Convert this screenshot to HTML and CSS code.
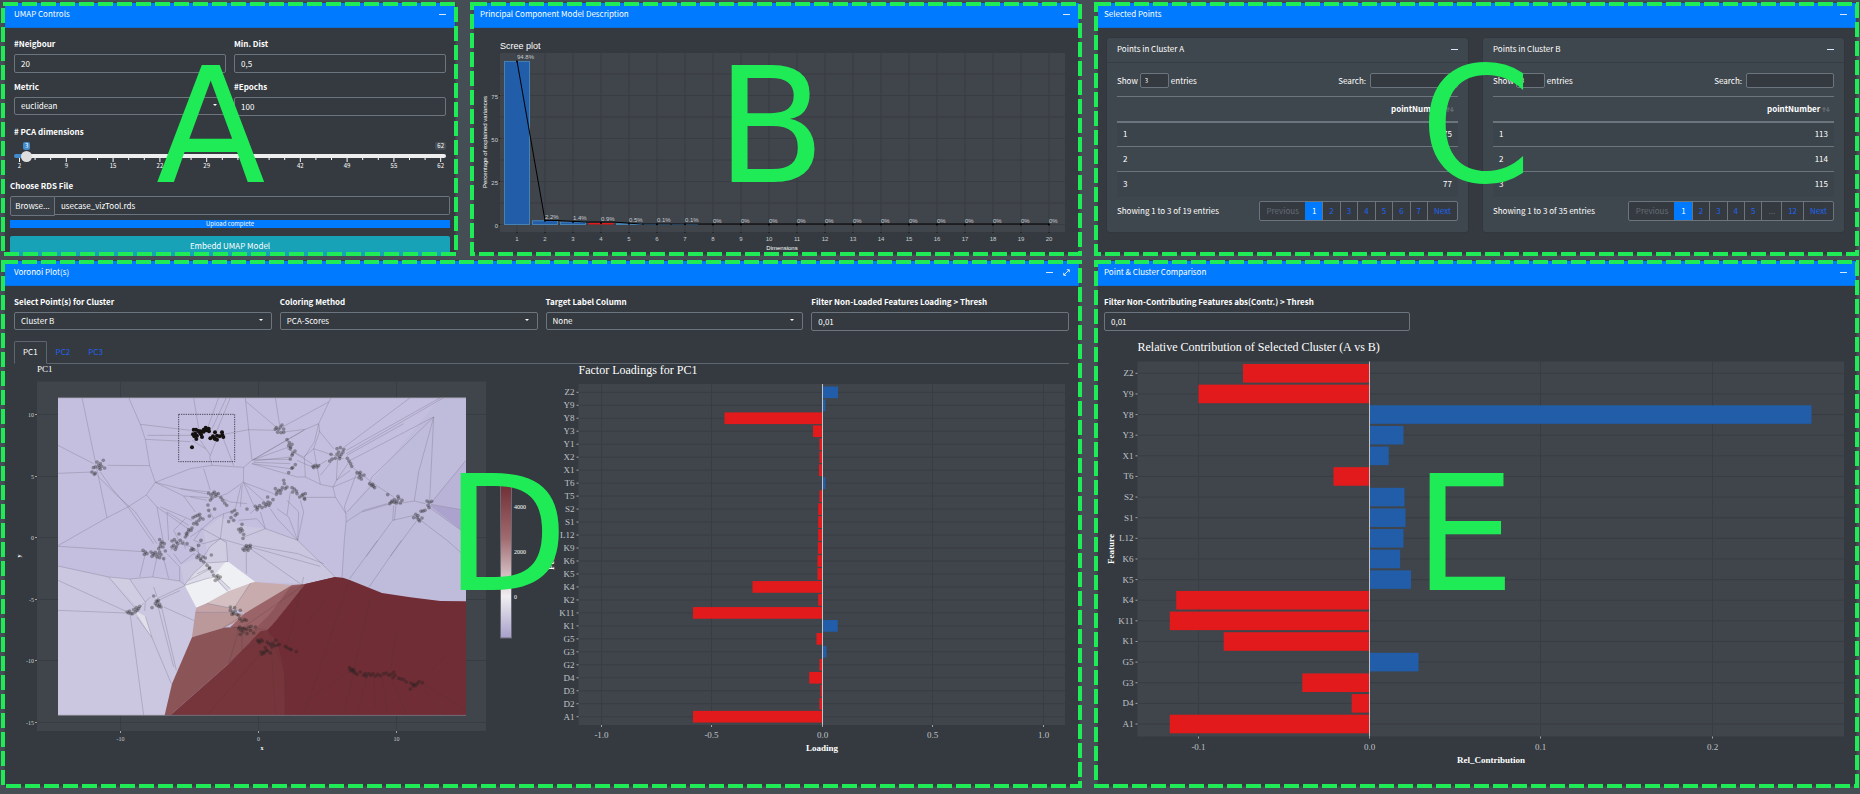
FILE: index.html
```html
<!DOCTYPE html>
<html lang="en">
<head>
<meta charset="utf-8">
<title>UMAP Visualisation</title>
<link rel="stylesheet" href="styles.css">
</head>
<body>
<main class="dashboard">

  <section class="panel panel-controls wide-pad">
    <div class="card">
      <header class="card-header"><h2>UMAP Controls</h2><button class="tool" aria-label="Collapse"><svg viewBox="0 0 7 7"><path d="M0 3.5H7"/></svg></button></header>
      <form class="controls">
        <div class="field-grid">
          <div class="field"><label for="neigh">#Neigbour</label><input id="neigh" type="text" value="20"></div>
          <div class="field"><label for="dist">Min. Dist</label><input id="dist" type="text" value="0,5"></div>
          <div class="field"><label for="metric">Metric</label><div class="select"><select id="metric"><option>euclidean</option></select></div></div>
          <div class="field"><label for="epochs">#Epochs</label><input id="epochs" type="text" value="100"></div>
        </div>
        <div class="slider">
          <label for="dims"># PCA dimensions</label>
          <div class="badges"><output class="badge-now">3</output><span class="badge-max">62</span></div>
          <input id="dims" type="range" min="2" max="62" value="3">
          <svg id="slider-scale" class="scale" viewBox="0 0 432 12"></svg>
        </div>
        <label class="file-label" for="browse">Choose RDS File</label>
        <div class="file"><button id="browse" type="button">Browse...</button><input type="text" value="usecase_vizTool.rds" aria-label="File name" readonly></div>
        <div class="progress">Upload complete</div>
        <button class="embed" type="button">Embedd UMAP Model</button>
      </form>
    </div>
    <svg class="frame"><rect/></svg>
    <span class="letter">A</span>
  </section>

  <section class="panel panel-scree">
    <div class="card">
      <header class="card-header"><h2>Principal Component Model Description</h2><button class="tool" aria-label="Collapse"><svg viewBox="0 0 7 7"><path d="M0 3.5H7"/></svg></button></header>
      <svg id="scree" class="plot sans" viewBox="480 28 593 226"></svg>
    </div>
    <svg class="frame"><rect/></svg>
    <span class="letter">B</span>
  </section>

  <section class="panel panel-points">
    <div class="card">
      <header class="card-header"><h2>Selected Points</h2><button class="tool" aria-label="Collapse"><svg viewBox="0 0 7 7"><path d="M0 3.5H7"/></svg></button></header>
      <div class="clusters">
        <article class="cluster">
          <header class="cluster-header"><h3>Points in Cluster A</h3><button class="tool" aria-label="Collapse"><svg viewBox="0 0 7 7"><path d="M0 3.5H7"/></svg></button></header>
          <div class="cluster-body">
            <div class="filter"><label>Show <select class="length"><option>3</option></select> entries</label><label>Search: <input class="search" type="search"></label></div>
            <table>
              <thead><tr><th></th><th>pointNumber <svg class="sort" viewBox="0 0 8 5"><path d="M2 5V1M0 2.500L2 .5L4 2.500M6 0V4M4 2.500L6 4.500L8 2.500"/></svg></th></tr></thead>
              <tbody><tr><td>1</td><td>75</td></tr><tr><td>2</td><td>76</td></tr><tr><td>3</td><td>77</td></tr></tbody>
            </table>
            <div class="table-foot"><span>Showing 1 to 3 of 19 entries</span>
              <nav class="pages"><a class="off" href="#">Previous</a><a class="on" href="#">1</a><a href="#">2</a><a href="#">3</a><a href="#">4</a><a href="#">5</a><a href="#">6</a><a href="#">7</a><a href="#">Next</a></nav></div>
          </div>
        </article>
        <article class="cluster">
          <header class="cluster-header"><h3>Points in Cluster B</h3><button class="tool" aria-label="Collapse"><svg viewBox="0 0 7 7"><path d="M0 3.5H7"/></svg></button></header>
          <div class="cluster-body">
            <div class="filter"><label>Show <select class="length"><option>3</option></select> entries</label><label>Search: <input class="search" type="search"></label></div>
            <table>
              <thead><tr><th></th><th>pointNumber <svg class="sort" viewBox="0 0 8 5"><path d="M2 5V1M0 2.500L2 .5L4 2.500M6 0V4M4 2.500L6 4.500L8 2.500"/></svg></th></tr></thead>
              <tbody><tr><td>1</td><td>113</td></tr><tr><td>2</td><td>114</td></tr><tr><td>3</td><td>115</td></tr></tbody>
            </table>
            <div class="table-foot"><span>Showing 1 to 3 of 35 entries</span>
              <nav class="pages"><a class="off" href="#">Previous</a><a class="on" href="#">1</a><a href="#">2</a><a href="#">3</a><a href="#">4</a><a href="#">5</a><a class="off" href="#">...</a><a href="#">12</a><a href="#">Next</a></nav></div>
          </div>
        </article>
      </div>
    </div>
    <svg class="frame"><rect/></svg>
    <span class="letter">C</span>
  </section>

  <section class="panel panel-voronoi wide-pad">
    <div class="card">
      <header class="card-header"><h2>Voronoi Plot(s)</h2>
        <button class="tool" aria-label="Collapse"><svg viewBox="0 0 7 7"><path d="M0 3.5H7"/></svg></button>
        <button class="tool" aria-label="Maximize"><svg viewBox="0 0 7 7"><path class="thin" d="M1 6L6 1M3.800 .7H6.300V3.200M.7 3.800V6.300H3.200"/></svg></button></header>
      <div class="voronoi-body">
        <div class="filters">
          <div class="field"><label for="cl">Select Point(s) for Cluster</label><div class="select"><select id="cl"><option>Cluster B</option></select></div></div>
          <div class="field"><label for="cm">Coloring Method</label><div class="select"><select id="cm"><option>PCA-Scores</option></select></div></div>
          <div class="field"><label for="tl">Target Label Column</label><div class="select"><select id="tl"><option>None</option></select></div></div>
          <div class="field"><label for="th">Filter Non-Loaded Features Loading &gt; Thresh</label><input id="th" type="text" value="0,01"></div>
        </div>
        <nav class="tabs"><a class="active" href="#">PC1</a><a href="#">PC2</a><a href="#">PC3</a></nav>
        <div class="plots">
          <svg id="voronoi" class="plot serif" viewBox="14 363 527 420"></svg>
          <svg id="loadings" class="plot serif" viewBox="541 363 528 420"></svg>
        </div>
      </div>
    </div>
    <svg class="frame"><rect/></svg>
    <span class="letter">D</span>
  </section>

  <section class="panel panel-compare">
    <div class="card">
      <header class="card-header"><h2>Point &amp; Cluster Comparison</h2><button class="tool" aria-label="Collapse"><svg viewBox="0 0 7 7"><path d="M0 3.5H7"/></svg></button></header>
      <div class="compare-body">
        <div class="field"><label for="ct">Filter Non-Contributing Features abs(Contr.) &gt; Thresh</label><input id="ct" type="text" value="0,01"></div>
        <svg id="contrib" class="plot serif" viewBox="1104 332 746 451"></svg>
      </div>
    </div>
    <svg class="frame"><rect/></svg>
    <span class="letter">E</span>
  </section>
</main>
<script src="script.js"></script>
</body>
</html>
```
FILE: styles.css
```css
* { box-sizing: border-box; }
body {
  margin: 0;
  background: #454d55;
  color: #fff;
  font-family: "Noto Sans CJK SC", "Open Sans", sans-serif;
  font-size: 8px;
  line-height: 12px;
}
h2, h3 { margin: 0; font-size: 8px; font-weight: 400; flex: 1; }
button, input, select { font: inherit; color: inherit; margin: 0; }
a { text-decoration: none; color: #1f63f0; }

.dashboard {
  display: grid;
  grid-template-columns: 457fr 612fr 765fr;
  gap: 4px 12px;
  padding: 2px 1px 6px;
}
.panel { position: relative; display: flex; padding: 1px 3px 2px 4px; min-width: 0; --pad: 6px; }
.wide-pad { --pad: 9px; }
.panel-voronoi { grid-column: span 2; }
.card { flex: 1; min-width: 0; background: #343a40; box-shadow: 0 0 2px rgba(0, 0, 0, .3); }
.card-header {
  display: flex;
  gap: 10px;
  height: 25px;
  padding: 5px 9px 0 var(--pad);
  background: #007bff;
  border-bottom: 1px solid #0a6fdf;
}
.tool { border: 0; padding: 0; background: none; width: 7px; height: 12px; }
.tool svg { display: block; width: 7px; height: 7px; fill: none; stroke: #d7e8fb; stroke-width: 1; }

.frame { position: absolute; inset: 0; width: 100%; height: 100%; pointer-events: none; }
.frame rect {
  x: 2px; y: 2px;
  width: calc(100% - 4px); height: calc(100% - 4px);
  fill: none; stroke: #1eeb56; stroke-width: 4; stroke-dasharray: 15 4;
}
.letter {
  position: absolute;
  top: 32px;
  font: 160px/186px "DejaVu Sans", sans-serif;
  color: #1eeb56;
  pointer-events: none;
}
.panel-controls .letter { left: 155px; }
.panel-scree .letter { left: 246px; }
.panel-points .letter { left: 326px; }
.panel-voronoi .letter { left: 444px; top: 182px; }
.panel-compare .letter { left: 320px; top: 182px; }

label { font-weight: 700; }
.field { display: flex; flex-direction: column; gap: 4px; min-width: 0; }
.field input, .select select, .file input {
  width: 100%;
  height: 19px;
  padding: 0 6px;
  background: #343a40;
  border: 1px solid #6c757d;
  border-radius: 2px;
}
.select { position: relative; }
.select select { appearance: none; height: 18px; display: block; }
.select::after {
  content: "";
  position: absolute;
  right: 9px;
  top: 7px;
  border: 2px solid transparent;
  border-top-color: #fff;
}

.controls { padding: 10px 5px 0; }
.field-grid { display: grid; grid-template-columns: 1fr 1fr; gap: 8px; padding: 0 4px; }
.slider { padding: 10px 4px 0; }
.slider label { display: block; }
.badges { display: flex; justify-content: space-between; margin-top: 4px; font-size: 6px; line-height: 8px; padding-left: 9px; }
.badges > * { padding: 0 2px; border-radius: 2px; }
.badge-now { background: #428bca; }
.badge-max { background: #454d55; }
.slider input {
  appearance: none;
  display: block;
  width: 100%;
  height: 4px;
  margin: 4px 0 0;
  border-radius: 2px;
  background: linear-gradient(90deg, #428bca 3%, #eee 3%);
}
.slider input::-webkit-slider-thumb {
  appearance: none;
  width: 11px;
  height: 11px;
  border-radius: 50%;
  background: #dedede;
}
.scale { display: block; width: 100%; overflow: visible; }
.scale path { stroke: #fff; stroke-width: 1; }
.scale text { fill: #fff; font-size: 6px; text-anchor: middle; }
.file-label { display: block; margin: 10px 0 4px; }
.file { display: flex; }
.file button {
  width: 45px;
  height: 20px;
  flex: none;
  padding: 0;
  background: #3a4047;
  border: 1px solid #6c757d;
  border-radius: 2px 0 0 2px;
}
.file input { border-left: 0; border-radius: 0 2px 2px 0; }
.progress { margin: 4px 0 8px; background: #007bff; text-align: center; font-size: 6px; line-height: 8px; }
.embed {
  display: block;
  width: 100%;
  height: 20px;
  margin-bottom: -2px;
  padding: 0;
  border: 0;
  border-radius: 2px;
  background: #17a2b8;
}

.clusters { display: grid; grid-template-columns: 1fr 1fr; gap: 15px; padding: 10px 12px 0 9px; }
.cluster { background: #3f474e; border-radius: 2px; box-shadow: 0 0 1px rgba(0, 0, 0, .4); padding-bottom: 11px; }
.cluster-header { display: flex; height: 25px; padding: 5px 10px 0; border-bottom: 1px solid #363d43; }
.cluster-body { padding: 10px 10px 0; }
.filter { display: flex; justify-content: space-between; }
.filter label { display: flex; align-items: center; gap: 2px; height: 15px; font-weight: 400; }
.length, .search { background: #343a40; border: 1px solid #6c757d; border-radius: 2px; height: 15px; padding: 0 4px; }
.length { appearance: none; width: 29px; font-size: 6px; }
.search { width: 88px; margin-left: 2px; }
table { width: 100%; border-collapse: collapse; margin-top: 8px; }
th { height: 25px; padding: 0 4px; text-align: right; border-top: 1px solid #6c757d; border-bottom: 2px solid #6c757d; }
td { height: 25px; padding: 0 6px; border-top: 1px solid #6c757d; }
td:last-child { text-align: right; }
tbody tr:nth-child(odd) { background: #3c444b; }
.sort { width: 8px; height: 5px; fill: none; stroke: #6f777e; }
.table-foot { display: flex; justify-content: space-between; align-items: center; margin-top: 4px; }
.pages { display: flex; border: 1px solid #6c757d; border-radius: 2px; background: #343a40; }
.pages a { padding: 3px 6px; line-height: 12px; border-left: 1px solid #6c757d; }
.pages a:first-child, .pages .on { border-left-color: transparent; }
.pages .on { background: #007bff; color: #fff; border-color: #007bff; }
.pages .off { color: #656d75; }

.voronoi-body { padding: 10px 10px 3px 9px; }
.filters { display: grid; grid-template-columns: repeat(4, 1fr); gap: 8px; }
.tabs { display: flex; margin-top: 10px; border-bottom: 1px solid #5d666e; }
.tabs a { padding: 4px 8px; border: 1px solid transparent; }
.tabs .active { color: #fff; border-color: #5d666e #5d666e #343a40; border-radius: 2px 2px 0 0; margin-bottom: -1px; }
.plots { display: grid; grid-template-columns: 527fr 528fr; margin-top: -1px; }
.compare-body { padding: 10px 6px 0; }
.compare-body .field { width: 41%; margin-bottom: 2px; }

.plot { display: block; width: 100%; }
.panel-scree .plot { padding: 0 6px; }
.sans { font-family: "Liberation Sans", Arial, sans-serif; }
.serif { font-family: "Liberation Serif", "Times New Roman", serif; }
.bg { fill: #40454b; }
.grid { stroke: #383d43; stroke-width: 1; fill: none; }
.tick { stroke: #a0a4a8; stroke-width: 1; fill: none; }
.tick-dark { stroke: #111; }
.zero { stroke: #c0c2c4; stroke-width: 1; }
.title { fill: #fff; font-size: 12px; }
.title-sm { fill: #fff; font-size: 9px; }
.axis { fill: #c0c4c8; font-size: 9px; }
.axis-sm { fill: #c8ccd0; font-size: 6px; }
.name { fill: #fff; font-size: 9px; font-weight: 700; }
.name-sm { fill: #fff; font-size: 6px; }
.bold { font-weight: 700; }
.neg { fill: #e31a1c; }
.pos { fill: #215da8; }
.edge { fill: none; stroke: #6a6478; stroke-opacity: .3; stroke-width: 3; }
.edge-dark { fill: none; stroke: #4a3238; stroke-opacity: .3; stroke-width: 2; }
.dot { fill: #222; fill-opacity: .38; }
.dot-on { fill: #14110f; }
.brush { fill: none; stroke: #4a4658; stroke-width: 3; stroke-dasharray: 4 3; }
```
FILE: script.js
```javascript
const NS = "http://www.w3.org/2000/svg";

function add(parent, tag, attrs, text) {
  const el = document.createElementNS(NS, tag);
  for (const key in attrs) el.setAttribute(key, attrs[key]);
  if (text !== undefined) el.textContent = text;
  parent.appendChild(el);
  return el;
}
function label(parent, x, y, text, cls, anchor, turn) {
  const attrs = { x, y, class: cls, "text-anchor": anchor || "middle", "dominant-baseline": "central" };
  if (turn) attrs.transform = `rotate(-90 ${x} ${y})`;
  add(parent, "text", attrs, text);
}

/* Slider scale */
{
  const svg = document.getElementById("slider-scale");
  const names = [2, 9, 15, 22, 29, 35, 42, 49, 55, 62];
  let d = "";
  for (let i = 0; i <= 27; i++) d += `M${5.5 + i * 15.6} 0v${i % 3 ? 2 : 4}`;
  add(svg, "path", { d });
  names.forEach((n, i) => add(svg, "text", { x: 5.5 + i * 46.8, y: 10 }, n));
}

/* Scree plot */
{
  const svg = document.getElementById("scree");
  const values = [94.8, 2.2, 1.4, 0.9, 0.5, 0.1, 0.1].concat(Array(13).fill(0));
  const x = i => 517 + i * 28, y = v => 224.5 - v * 1.72;
  add(svg, "rect", { x: 500, y: 53, width: 565, height: 179, class: "bg" });
  let d = "", t = "";
  values.forEach((v, i) => { d += `M${x(i)} 53V232`; t += `M${x(i)} 232v1`; });
  for (let v = 0; v < 100; v += 12.5) d += `M500 ${y(v)}H1065`;
  for (let v = 0; v < 100; v += 25) t += `M500 ${y(v)}h-1`;
  add(svg, "path", { d, class: "grid" });
  add(svg, "path", { d: t, class: "tick tick-dark" });
  values.forEach((v, i) => add(svg, "rect", {
    x: x(i) - 12.5, y: y(v), width: 25, height: v * 1.72,
    class: i === 3 ? "neg" : "pos", stroke: i === 3 ? "none" : "#4682b4"
  }));
  add(svg, "path", { d: `M${x(0)} 61L${x(1)} 220.500L557 220.500L586 222H613L641 224H${x(19)}`, fill: "none", stroke: "#000" });
  values.forEach((v, i) => {
    add(svg, "circle", { cx: x(i), cy: y(v), r: 1 });
    label(svg, x(i), y(v) - 4, v + "%", "axis-sm", "start");
    label(svg, x(i), 239, i + 1, "axis-sm");
  });
  [0, 25, 50, 75].forEach(v => label(svg, 498, y(v) + 1, v, "axis-sm", "end"));
  label(svg, 500, 46, "Scree plot", "title-sm", "start");
  label(svg, 782, 248, "Dimensions", "name-sm");
  label(svg, 485, 142, "Percentage of explained variances", "name-sm", "middle", true);
}

/* Horizontal bar charts */
function bars(id, o) {
  const svg = document.getElementById(id);
  add(svg, "rect", { x: o.left, y: o.top, width: o.right - o.left, height: o.bottom - o.top, class: "bg" });
  const step = (o.last - o.first) / (o.data.length - 1);
  let d = "", t = "";
  o.data.forEach((r, i) => { const y = o.first + i * step; d += `M${o.left} ${y}H${o.right}`; t += `M${o.left} ${y}h-2`; });
  o.ticks.forEach(k => { d += `M${k[0]} ${o.top}V${o.bottom}`; t += `M${k[0]} ${o.bottom}v2`; });
  add(svg, "path", { d, class: "grid" });
  add(svg, "path", { d: t, class: "tick" });
  o.data.forEach(([name, w], i) => {
    const y = o.first + i * step;
    add(svg, "rect", { x: w < 0 ? o.zero + w : o.zero, y: y - step * 0.45, width: Math.abs(w), height: step * 0.9, class: w < 0 ? "neg" : "pos" });
    label(svg, o.left - 4, y, name, "axis", "end");
  });
  add(svg, "path", { d: `M${o.zero} ${o.top}V${o.bottom}`, class: "zero" });
  o.ticks.forEach(k => label(svg, k[0], o.bottom + 10, k[1], "axis"));
  label(svg, o.left, o.titleY, o.title, "title", "start");
  label(svg, o.nameX, o.bottom + 23, o.name, "name");
  label(svg, o.featX, o.featY, "Feature", "name", "middle", true);
}
bars("loadings", {
  left: 578.5, right: 1065, top: 384, bottom: 725, first: 392.3, last: 716.7, zero: 822.5,
  ticks: [[601.5, "-1.0"], [711.5, "-0.5"], [822.5, "0.0"], [932.5, "0.5"], [1043.5, "1.0"]],
  title: "Factor Loadings for PC1", titleY: 370, name: "Loading", nameX: 822, featX: 551, featY: 555,
  data: [["Z2", 15.5], ["Y9", 3], ["Y8", -98], ["Y3", -9.5], ["Y1", -3], ["X2", -3], ["X1", -3.5], ["T6", 3], ["T5", -3],
    ["S2", -4.3], ["S1", -4.3], ["L12", -4.3], ["K9", -4.6], ["K6", -5], ["K5", -5], ["K4", -70], ["K2", -4.3], ["K11", -129.5],
    ["K1", 15.3], ["G5", -6], ["G3", 4], ["G2", -3], ["D4", -13.3], ["D3", -2], ["D2", -3], ["A1", -129.5]]
});
bars("contrib", {
  left: 1137.5, right: 1844, top: 360.5, bottom: 735.5, first: 372.3, last: 723, zero: 1369.5,
  ticks: [[1198.5, "-0.1"], [1369.5, "0.0"], [1540.5, "0.1"], [1712.5, "0.2"]],
  title: "Relative Contribution of Selected Cluster (A vs B)", titleY: 346, name: "Rel_Contribution", nameX: 1491, featX: 1111, featY: 548,
  data: [["Z2", -126.5], ["Y9", -171], ["Y8", 442], ["Y3", 34], ["X1", 19.3], ["T6", -36], ["S2", 35], ["S1", 36], ["L12", 34],
    ["K6", 30.6], ["K5", 41.5], ["K4", -193.3], ["K11", -199.7], ["K1", -145.8], ["G5", 49], ["G3", -67.2], ["D4", -17.8], ["A1", -199.7]]
});

/* Voronoi map: cells and points on a 1230 x 955 plane */
{
  const svg = document.getElementById("voronoi");
  add(svg, "rect", { x: 37, y: 381.5, width: 449, height: 349.5, class: "bg" });
  const xs = [[120.5, "-10"], [258.5, "0"], [396.5, "10"]];
  const ys = [[414.5, "10"], [476.5, "5"], [537.5, "0"], [599.5, "-5"], [660.5, "-10"], [722.5, "-15"]];
  add(svg, "path", { d: xs.map(k => `M${k[0]} 381V731`).join("") + ys.map(k => `M37 ${k[0]}H486`).join(""), class: "grid" });
  add(svg, "path", { d: xs.map(k => `M${k[0]} 731v2`).join("") + ys.map(k => `M37 ${k[0]}h-2`).join(""), class: "tick" });
  xs.forEach(k => label(svg, k[0], 739, k[1], "axis-sm"));
  ys.forEach(k => label(svg, 34, k[0], k[1], "axis-sm", "end"));
  label(svg, 37, 369, "PC1", "title-sm", "start");
  label(svg, 262, 748, "x", "name-sm bold");
  label(svg, 19, 556, "y", "name-sm bold", "middle", true);

  const g = add(svg, "g", { transform: "translate(57 397) scale(.33333)" });
  const cells = [
    ["#c4bfde", "3,2 1227,2 1227,955 3,955"],
    ["#bfbbdb", "1150,2 1227,2 1227,613 1150,612 975,588 878,549 855,540 867,375 870,345"],
    ["#b9b3d8", "1227,190 1120,320 1227,337"],
    ["#aba3ce", "1112,322 1227,340 1227,410"],
    ["#cbc7e1", "3,507 155,540 218,546 285,540 368,552 385,565 418,632 405,721 345,860 323,955 3,955"],
    ["#cac6e0", "440,400 490,360 550,385 625,395 722,430 835,539 750,560 595,555 515,495 445,498 383,563 370,505 450,470"],
    ["#d0cde3", "155,540 218,546 265,615 250,640"],
    ["#d0cde3", "490,427 508,440 512,494 445,498 458,450"],
    ["#dcdae9", "383,563 410,529 445,498 510,494 470,540"],
    ["#eef0f4", "383,565 448,545 470,538 505,495 515,495 595,555 515,583 450,619 418,632"],
    ["#dcd9e6", "477,548 488,543 522,575 510,583"],
    ["#e0dfea", "232,640 265,658 285,722"],
    ["#d4c0c2", "450,619 515,583 580,559 530,635"],
    ["#c7abad", "580,558 595,555 705,564 565,650 530,635"],
    ["#c4a4a7", "418,632 450,619 530,635 525,647 415,646"],
    ["#bb989a", "415,646 525,647 560,650 545,672 500,692 405,721"],
    ["#9a6468", "565,648 705,564 745,561 640,690 560,720 520,690"],
    ["#8e555a", "745,561 700,570 640,650 600,690 560,740 600,730 632,700"],
    ["#8b5457", "405,721 500,692 560,690 605,703 560,760 515,800 340,955 323,955 345,860"],
    ["#76353b", "340,955 515,800 560,755 610,703 632,700 745,561 835,540 700,955"],
    ["#702d35", "685,955 683,830 660,735 630,700 660,670 745,561 835,540 858,542 878,549 975,588 1060,601 1150,612 1227,613 1227,955"]
  ];
  cells.forEach(([fill, points]) => add(g, "polygon", { fill, points }));

  const edges = `M75 2L150 362M215 2L250 82L265 127L278 206L295 256L268 294L213 330L150 362L3 446M3 145L110 200M3 229L108 225M152 205L278 206
M130 225L165 275L213 330L290 440M120 235L180 295L235 345L300 440M250 82L400 100M272 115H405M265 127L400 134M410 2L425 95M485 2L452 92M508 2L465 95M520 2L478 105M565 2L575 98L585 190L560 211L465 205L400 215L295 256
M500 112L575 98L655 100M497 120L530 206M478 130L458 180L465 205M430 130L460 175M405 130L445 155M655 2L668 85M565 12L660 92M815 15L680 88M822 2L785 80L772 135L742 180L745 240M680 105L745 97L785 80M745 97L585 190M740 100L640 158L590 188
M585 190L695 150M590 187H700M590 192L700 180M590 196L700 200M585 200L700 215M585 200L720 240L745 240L790 262L828 270M690 155L740 180L770 155L860 185M785 100L830 155M785 80L788 103L770 155L790 262
M1060 2L862 150M1150 2L868 160M1160 2L868 170M1040 80L870 175M1130 60L880 190L838 250L828 270L835 300L867 350L867 375M745 301H835M842 180L838 250M835 180L790 235M880 220L838 250M900 240L828 270M940 270L870 345M935 262L945 240L1130 60M1130 60L1085 225L1072 312M1130 60L1118 310M1227 190L1122 318M1122 322L1227 340M1115 330L1227 410
M990 320L920 340L867 375M1000 320L915 345M1010 325L1007 370M1017 325L1012 370M1022 320L1072 312L1105 320M1007 370L928 478M1080 370L1000 478M1007 370L1072 355M1085 365L1170 430L1227 480M885 210L950 260L1010 300M867 375L862 430L855 540M962 430L878 545M1033 430L935 572M900 225L862 330L867 350
M440 215L460 280M560 211L559 256L510 290L480 300M559 256L640 330M559 256L590 325M556 262L550 330M552 265L535 335M559 256L650 290M295 256L370 275L455 292M295 256L380 297L455 302M380 297L415 345M400 300L450 310M268 294L300 330L400 400M300 330L320 440M330 345L395 385M310 330L405 370M330 345L335 430M370 275L455 285
M475 295L520 315L570 320M455 340L470 365L500 350L535 340M500 350L490 425M470 365L435 395L490 425L508 436L512 494M435 395L410 430L440 440L490 425M435 395L400 420M545 370L600 365L625 395L722 430M610 345L625 395M640 335L660 365L722 430M660 335L695 360L722 430M690 310L725 345L722 430M730 310L740 345L722 430M700 285L690 355M560 420L600 405L625 395M490 425L560 445M580 445L722 470L800 500M580 450L790 508M580 455L730 560M722 430L835 540M568 465L568 530M3 448L260 464M265 470L248 540M300 480L287 540M320 485L335 545M330 470L368 510L368 552M340 460L370 440L405 450L440 480L458 450L490 425M350 470L372 500L410 470L450 500M3 507L155 540L218 546L285 540L368 552L385 565
M383 563L410 529L445 498L512 494M385 565L448 545L475 540M395 550L455 518M420 530L460 512M480 548L512 583M488 545L520 575M3 550L205 642M155 540L240 640M218 546L265 615L263 642M300 605L385 565M300 612L370 580M3 640L205 648M220 655L260 955M240 660L285 722L343 860M285 722L265 658M303 628L350 810M315 635L358 820M320 630L412 671M415 646H530M450 619L530 635M580 559L530 635M240 642L260 618M280 600L265 615M290 570L300 600M380 430L385 455M420 440L425 470M350 400L370 440M385 365L350 400M600 330L580 350M700 160L765 200M720 190L765 210M785 205L810 190`;
  add(g, "path", { d: edges, class: "edge" });
  add(g, "path", { class: "edge-dark", d: "M500 692L560 690L632 700M565 650L500 692M545 700L515 800M555 710L555 760M600 740L560 760M615 765L450 955M650 740L683 830V955M640 700L655 955M690 750L740 540M820 590L700 740M878 549L740 955M940 600L860 955M1020 700L1000 820M880 820L740 920M930 835L900 955M950 840L955 930M975 835L990 940M1000 840L1050 955M1080 860L1170 955M1100 860L1227 940M1100 840L1227 720M530 690L600 700M560 690L745 561" });
  add(g, "path", { d: "M3 2H1227M3 955H1227", stroke: "#77757f", "stroke-width": 2 });

  const dots = `120,195 125,205 130,200 115,210 126,212 134,208 109,212 105,225 112,232 115,228 139,190 143,213 130,217
658,92 665,97 670,90 675,84 680,96 672,107 680,106 655,97 662,106 690,128 697,137 695,146 701,150 705,142 700,155 707,170 714,162 705,175 700,186 715,203 707,212 704,214 695,227 768,208 775,205 780,210 785,206 770,212
840,155 850,152 845,165 853,172 848,178 858,165 860,157 840,172 835,184 822,172 825,186 818,192 848,185 871,184 876,192 881,200 884,208 900,227 907,232 912,237 906,242 913,246 921,234 910,226 938,260 943,265 949,268 953,272 947,262
992,293 1005,312 1012,308 1020,312 1025,304 1030,318 1018,318 1035,310 1023,298 998,320 1003,316 1012,316 1110,312 1117,316 1124,313 1113,325 1116,332 1098,342 1092,343 1104,340 1076,352 1070,362 1080,362 1085,368 1088,372 1095,363 1083,356
455,288 462,294 468,290 472,285 478,292 484,290 465,303 475,298 460,309 492,302 497,310 503,318 509,325 453,324 455,340 473,336 457,357 655,275 660,285 665,280 658,292 670,289 680,250 682,260 676,272 685,275 672,280 690,270 705,272 712,276 718,282 707,285 720,290 728,300 735,296 742,303 738,292 745,290 743,307
595,328 602,332 608,326 600,338 615,332 620,318 628,322 633,315 636,325 625,328 632,300 640,318 648,308 570,336 525,345 533,340 540,350 535,355 522,362 530,370 515,374 555,382 545,397 550,405 556,400 552,395 560,412 558,424
408,362 415,358 422,355 430,362 426,370 418,375 410,380 420,382 438,366 428,352 395,398 402,400 388,410 393,405 385,420 390,414 405,393 366,411 308,428 315,435 322,440 310,448 305,455 318,450 312,440 345,432 352,428 358,435 350,445 358,450 362,440 355,457 370,430 345,450 377,438 390,440 432,430
258,460 265,465 262,472 270,470 282,465 288,470 295,466 302,472 285,478 292,474 300,480 308,465 312,473 308,482 320,485 325,462 405,455 402,460 410,458 425,445 425,475 430,485 438,480 432,490 445,483 463,474 420,482 440,495 450,505 458,512 465,524 470,535 478,540 484,545 475,550 482,536 490,540 457,515
558,456 565,450 570,455 575,448 580,445 562,460 573,460 580,453 568,446 210,645 215,648 222,650 218,642 230,638 238,632 245,635 240,640 235,645 248,628 227,650 290,597 285,632 295,620 302,615 308,622 300,625 306,628 298,612 312,630 304,610
520,640 528,645 535,642 530,650 540,652 525,652 533,632 545,655 520,630 550,640 548,665 555,672 562,668 568,670 545,695 552,700 558,705 550,712 562,695 568,698 575,690 570,710 580,700 590,708 595,690 582,688 556,695 548,690 605,733 612,728 608,737 616,732 602,730 630,735 635,740 642,743 648,738 652,746 656,730 645,750 660,745 667,742 685,748 690,752 698,756 703,758 718,764 625,752 628,760 620,765 615,772 622,768 632,762 612,765 640,768
877,812 882,816 886,820 890,825 895,828 880,822 900,832 910,825 920,835 928,838 935,830 942,835 948,830 955,838 962,832 970,836 980,830 988,828 995,835 1002,832 1010,826 1014,835 1008,842 1025,844 1032,846 1040,848 1048,855 1062,858 1070,862 1075,866 1080,860 1068,866 1086,854 1096,857 1060,876 925,830 890,818`;
  dots.trim().split(/\s+/).forEach(p => { const [cx, cy] = p.split(","); add(g, "circle", { cx, cy, r: 5.5, class: "dot" }); });
  const on = "410,98 417,98 424,102 408,112 415,110 420,116 418,126 428,106 432,112 435,120 440,104 446,92 448,100 455,95 456,103 440,98 460,124 468,118 474,106 472,124 480,116 480,128 488,118 495,106 496,114 499,120 474,126 405,151 412,118 430,103";
  on.split(" ").forEach(p => { const [cx, cy] = p.split(","); add(g, "circle", { cx, cy, r: 6, class: "dot-on" }); });
  add(g, "rect", { x: 365, y: 52, width: 168, height: 142, class: "brush" });

  /* Colour scale */
  const grad = add(add(svg, "defs", {}), "linearGradient", { id: "scale", x1: 0, y1: 0, x2: 0, y2: 1 });
  [[0, "#702d35"], [0.35, "#a06a6f"], [0.73, "#f0eef1"], [1, "#a79fca"]].forEach(([offset, c]) => add(grad, "stop", { offset, "stop-color": c }));
  add(svg, "rect", { x: 500.5, y: 484, width: 11, height: 154, fill: "url(#scale)", stroke: "#6a6a74" });
  [[507, "4000"], [552, "2000"], [597, "0"]].forEach(([y, t]) => label(svg, 514, y, t, "name-sm", "start"));
}
```
